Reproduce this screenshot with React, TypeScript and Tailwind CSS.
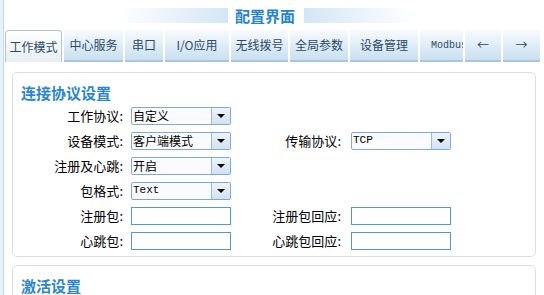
import React from "react";

const tabs = [
  { label: "工作模式", w: "w-[57px]", active: true },
  { label: "中心服务", w: "w-[59px]" },
  { label: "串口", w: "w-[38px]" },
  { label: "I/O应用", w: "w-[64px]" },
  { label: "无线拨号", w: "w-[57px]" },
  { label: "全局参数", w: "w-[58px]" },
  { label: "设备管理", w: "w-[68px]" },
  { label: "Modbus", w: "w-[43px]", mono: true },
  { label: "←", w: "w-[36px]" },
  { label: "→", w: "w-[37px]" },
];

function Select({ value, mono }: { value: string; mono?: boolean }) {
  return (
    <div className="w-[100px] h-[18px] flex border border-[#7ea9dd] rounded-[2px] bg-[#f9fbfe]">
      <div
        className={`flex-1 flex items-center pl-[1px] text-black leading-none ${
          mono ? "font-['Liberation_Mono',monospace] text-[11px]" : "text-[12px]"
        }`}
      >
        {value}
      </div>
      <div className="w-[19px] flex items-center justify-center border-l border-[#9bbbe2] bg-linear-to-b from-[#eef4fb] to-[#d3e1f2]">
        <div className="w-0 h-0 border-l-[4px] border-r-[4px] border-t-[4px] border-l-transparent border-r-transparent border-t-black" />
      </div>
    </div>
  );
}

function Input() {
  return <div className="w-[100px] h-[18px] border border-[#5199cf] bg-white" />;
}

function Label({ text, wide }: { text: string; wide?: boolean }) {
  return (
    <div
      className={`${wide ? "w-[120px] pr-[10px]" : "w-[118px] pr-[8px]"} text-right text-[13px] text-black leading-none`}
    >
      {text}:
    </div>
  );
}

export default function App() {
  return (
    <div className="w-[544px] h-[295px] overflow-hidden bg-white flex flex-col font-['Noto_Sans_CJK_SC',sans-serif]">
      <div className="h-[3px] bg-[#bbdbf8]" />
      <div className="flex flex-1">
        <div className="w-[4px] bg-[#e6f1fa] border-r border-[#c3daee]" />
        <div className="flex-1 flex flex-col">
          {/* title */}
          <div className="h-[30px] flex items-center ml-[113px]">
            <div className="w-[111px] h-[15px] bg-linear-to-r from-white to-[#d3e6f6]" />
            <div className="ml-[7px] mr-[9px] text-[15px] font-bold text-[#2684d0] leading-none">
              配置界面
            </div>
            <div className="w-[111px] h-[15px] bg-linear-to-r from-[#d3e6f6] to-white" />
          </div>

          {/* tabs */}
          <div className="h-[32px] flex gap-[2px] ml-[1px]">
            {tabs.map((t) => (
              <div
                key={t.label}
                className={`${t.w} shrink-0 flex items-center justify-center overflow-hidden whitespace-nowrap text-[#2b4a68] ${
                  t.active
                    ? "bg-linear-to-b from-white to-[#e7eef3] border border-b-0 border-[#b0c4d3] rounded-t-[4px] text-[12px]"
                    : "bg-linear-to-b from-[#f8fbfe] to-[#c9dff0] border-b-2 border-[#a7c7e0] " +
                      (t.mono
                        ? "font-['Liberation_Mono',monospace] text-[10px] justify-start pl-[11px]"
                        : "text-[12px]")
                }`}
              >
                {t.label}
              </div>
            ))}
          </div>

          {/* content */}
          <div className="ml-[8px] mt-[10px] w-[524px] border border-[#dedede] rounded-[5px] pt-[10px] pl-[8px] pb-[3px]">
            <div className="text-[15px] font-bold text-[#2a86d0] leading-[20px]">连接协议设置</div>
            <div className="-ml-[8px] flex flex-col">
              <div className="h-[25px] flex items-center">
                <Label text="工作协议" />
                <Select value="自定义" />
              </div>
              <div className="h-[25px] flex items-center">
                <Label text="设备模式" />
                <Select value="客户端模式" />
                <Label text="传输协议" wide />
                <Select value="TCP" mono />
              </div>
              <div className="h-[25px] flex items-center">
                <Label text="注册及心跳" />
                <Select value="开启" />
              </div>
              <div className="h-[25px] flex items-center">
                <Label text="包格式" />
                <Select value="Text" mono />
              </div>
              <div className="h-[25px] flex items-center">
                <Label text="注册包" />
                <Input />
                <Label text="注册包回应" wide />
                <Input />
              </div>
              <div className="h-[25px] flex items-center">
                <Label text="心跳包" />
                <Input />
                <Label text="心跳包回应" wide />
                <Input />
              </div>
            </div>
          </div>

          <div className="ml-[8px] mt-[8px] w-[524px] h-[60px] shrink-0 border border-[#dedede] rounded-[5px] pt-[10px] pl-[8px]">
            <div className="text-[15px] font-bold text-[#2a86d0] leading-[20px]">激活设置</div>
          </div>
        </div>
      </div>
    </div>
  );
}
